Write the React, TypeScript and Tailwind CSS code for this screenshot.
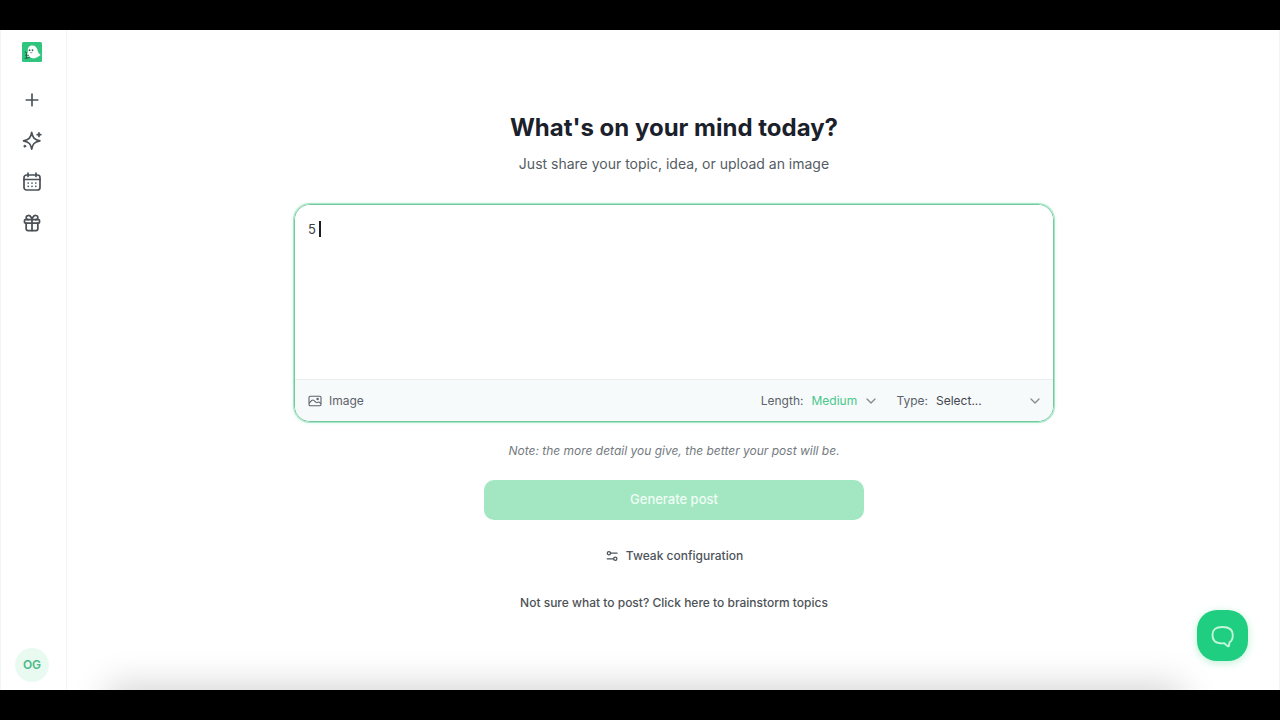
import { useState } from "react";
import { Plus, ChevronDown, Gift } from "lucide-react";

const navItem = "flex size-5 items-center justify-center text-[#4b5157]";

const Logo = () => (
  <svg viewBox="0 0 20 20" className="size-5">
    <rect width="20" height="20" rx="1.5" fill="#2fc57e" />
    <path
      d="M5.8 8.8C5.6 5.2 7.6 3.4 10.2 3.4c3 0 5 2 5.4 5 .3 1.9 1.3 3.2 3.2 4.6-1 .1-1.400.6-1.500 1.300-1-.1-1.600.3-1.800 1.100-1-.2-1.600.2-2.100.8-1.700.3-3.500.1-4.900-.8-1-.6-2-.9-3-1-1.100-.2-1.500-1.200-.9-2 .6-.7 1.300-.9 1.200-3.600Z"
      fill="#fff"
    />
    <circle cx="7.6" cy="8.2" r=".9" fill="#17633f" />
    <circle cx="10.5" cy="8.1" r=".9" fill="#17633f" />
    <path d="M8.3 10.4c.7.6 1.5.5 2.1-.2" fill="none" stroke="#17633f" strokeWidth=".7" />
    <path d="M3 9.8l1.5 1.2v5.2H2.6M3 13.2h4M4.6 16.4l3.2-1.3" fill="none" stroke="#1c6b46" strokeWidth="1.1" />
  </svg>
);

const SparkleIcon = () => (
  <svg viewBox="0 0 20 20" className="size-5" fill="none" stroke="currentColor" strokeWidth="1.7" strokeLinejoin="round" strokeLinecap="round">
    <path d="M9.7 1.4c.9 5.2 2.5 7.1 8.2 8.4-5.7 1.3-7.3 3.2-8.2 8.4-.9-5.2-2.5-7.1-8.2-8.4 5.7-1.3 7.3-3.2 8.2-8.4Z" />
    <path d="M17 1.9v3.6M15.2 3.7h3.6" />
    <circle cx="2.8" cy="15.2" r="1" fill="currentColor" strokeWidth=".8" />
  </svg>
);

const CalendarIcon = () => (
  <svg viewBox="0 0 20 20" className="size-5" fill="none" stroke="currentColor" strokeWidth="1.7" strokeLinecap="round">
    <rect x="2" y="3" width="16" height="15" rx="2.5" />
    <path d="M2 7.5h16M6 1.2v3.3M14 1.2v3.3" />
    <path d="M6.2 11h.01M10 11h.01M13.8 11h.01M6.2 14.3h.01M10 14.3h.01M13.8 14.3h.01" />
  </svg>
);

const ImageIcon = () => (
  <svg viewBox="0 0 14 14" className="size-3.5" fill="none" stroke="currentColor" strokeWidth="1.1" strokeLinejoin="round">
    <rect x="1" y="2.2" width="12" height="9.6" rx="1.2" />
    <path d="M1.2 9.3C2.4 8 3.4 6 4.9 6c1.6 0 2.4 2.7 3.8 2.7.8 0 1-.7 1.7-.7.9 0 1.6.8 2.5 1.6" />
    <circle cx="9.6" cy="5" r=".7" />
  </svg>
);

const SlidersIcon = () => (
  <svg viewBox="0 0 14 14" className="size-3.5" fill="none" stroke="currentColor" strokeWidth="1.3" strokeLinecap="round">
    <circle cx="3.9" cy="4.2" r="1.6" />
    <path d="M5.7 4.2h6.3" />
    <circle cx="10.3" cy="9.8" r="1.6" />
    <path d="M8.5 9.8H2.2" />
  </svg>
);

const ChatIcon = () => (
  <svg viewBox="0 0 24 24" className="size-6" fill="none" stroke="#c4f6db" strokeWidth="1.9" strokeLinejoin="round">
    <path d="M11.500 3c6.500 0 10.300 2 10.300 8 0 3.800-1.100 6-3.200 7.200l-.6 3.500c-.1.700-.7.900-1.200.5l-3.500-2.900c-.7.100-1.200.1-1.800.1-6.700 0-10-2.300-10-8.300 0-6 3.500-8.100 10-8.100Z" />
  </svg>
);

const Sidebar = () => (
  <nav className="flex w-[67px] shrink-0 flex-col items-center border-x border-[#f3f5f5] pt-3 pr-[3px] pb-2">
    <a href="#" aria-label="Home"><Logo /></a>
    <div className="mt-7 flex flex-col gap-[21px]">
      <button type="button" aria-label="New post" className={navItem}>
        <Plus className="size-5" strokeWidth={2} />
      </button>
      <button type="button" aria-label="Ideas" className={navItem}>
        <SparkleIcon />
      </button>
      <button type="button" aria-label="Calendar" className={navItem}>
        <CalendarIcon />
      </button>
      <button type="button" aria-label="Rewards" className={navItem}>
        <Gift className="size-5" strokeWidth={2.1} />
      </button>
    </div>
    <button type="button" className="mt-auto size-[34px] rounded-full bg-[#e9fbf1] text-xs font-semibold text-[#4fb88a]">
      OG
    </button>
  </nav>
);

const Composer = () => {
  const [text, setText] = useState("5 ");

  return (
    <div className="mt-7 w-full max-w-[760px] overflow-hidden rounded-2xl border border-[#74c9a0] shadow-[0_0_0_1px_#a9e5c7,0_0_4px_#c9f3dd]">
      <div className="relative">
        <textarea
          aria-label="Topic"
          value={text}
          onChange={(e) => setText(e.target.value)}
          className="block h-[174px] w-full resize-none bg-white px-[13px] py-3.5 text-[13px] leading-5 text-[#3a4046] caret-transparent outline-none"
        />
        {text === "5 " && <span className="absolute top-4 left-6 h-4 w-[2px] bg-[#1c2024]" />}
      </div>
      <div className="flex h-[42px] items-center border-t border-[#e9eeee] bg-[#f7fafb] pr-[9px] pl-[13px] text-xs text-[#5b6269]">
        <button type="button" className="flex items-center gap-[7px]">
          <ImageIcon />
          Image
        </button>
        <label htmlFor="length" className="ml-auto">Length:</label>
        <div className="relative ml-2 flex w-[69px] items-center">
          <select id="length" defaultValue="Medium" className="w-full appearance-none bg-transparent text-[#48c78a] outline-none">
            <option>Short</option>
            <option>Medium</option>
            <option>Long</option>
          </select>
          <ChevronDown className="pointer-events-none absolute right-px size-4 text-[#858c92]" strokeWidth={2} />
        </div>
        <label htmlFor="type" className="ml-4">Type:</label>
        <div className="relative ml-2 flex w-[108px] items-center">
          <select id="type" className="w-full appearance-none bg-transparent text-[#3f464d] outline-none">
            <option>Select...</option>
            <option>Story</option>
            <option>List</option>
          </select>
          <ChevronDown className="pointer-events-none absolute right-px size-4 text-[#858c92]" strokeWidth={2} />
        </div>
      </div>
    </div>
  );
};

export default function App() {
  return (
    <div className="flex min-h-screen flex-col bg-black py-[30px] font-['Inter',sans-serif]">
      <div className="relative flex flex-1 overflow-hidden bg-white">
        <Sidebar />
        <main className="flex flex-1 flex-col items-center border-r border-[#f3f5f5] pt-20 pr-6 pl-[26px]">
          <h1 className="text-2xl leading-9 font-bold text-[#1a212b]">What's on your mind today?</h1>
          <p className="mt-1.5 text-sm leading-6 text-[#555c63]">Just share your topic, idea, or upload an image</p>
          <Composer />
          <p className="mt-[19px] text-xs leading-5 text-[#747a80] italic">
            Note: the more detail you give, the better your post will be.
          </p>
          <button type="button" className="mt-[19px] h-10 w-full max-w-[380px] rounded-[10px] bg-[#a2e7c1] text-[13px] font-medium text-[#f0fdf6]">
            Generate post
          </button>
          <button type="button" className="mt-[26px] flex h-5 items-center gap-[7px] text-xs font-medium text-[#4d545c]">
            <SlidersIcon />
            Tweak configuration
          </button>
          <a href="#" className="mt-[27px] text-xs leading-5 font-medium text-[#4d5257]">
            Not sure what to post? Click here to brainstorm topics
          </a>
        </main>
        <div className="pointer-events-none absolute right-[110px] -bottom-7 left-[120px] h-5 shadow-[0_0_36px_12px_rgba(0,0,0,0.18)]" />
        <button
          type="button"
          aria-label="Open chat"
          className="absolute right-8 bottom-[29px] flex size-[51px] items-center justify-center rounded-[20px] bg-[#1fce80] shadow-[0_2px_8px_#bff0d7]"
        >
          <ChatIcon />
        </button>
      </div>
    </div>
  );
}
